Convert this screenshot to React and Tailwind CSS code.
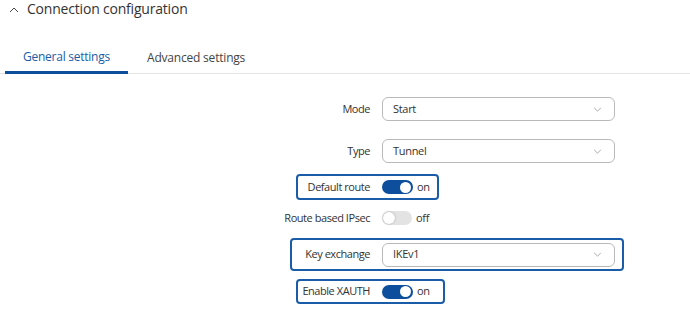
import React from 'react';

const font = { fontFamily: '"Open Sans", "Noto Sans", sans-serif' };

const Chevron = ({ className }) => (
  <svg viewBox="0 0 10 6" className={className} fill="none" stroke="currentColor" strokeWidth="1">
    <path d="M1 1l4 4 4-4" />
  </svg>
);

const Select = ({ value }) => (
  <div className="flex items-center justify-between w-[233px] h-[24px] rounded-[6px] border border-[#b9b9b9] bg-white pl-[10px] pr-[12px]">
    <span className="text-[11px] tracking-[-0.3px] text-[#333]">{value}</span>
    <Chevron className="w-[9px] h-[5px] text-[#9a9a9a]" />
  </div>
);

const Toggle = ({ on }) => (
  <div className="flex items-center gap-[4px]">
    <div
      className={
        on
          ? 'flex items-center justify-end w-[31px] h-[14px] rounded-full bg-[#0d4f9c] px-[2px]'
          : 'flex items-center justify-start w-[30px] h-[14px] rounded-full bg-[#e3e3e3] px-[1px]'
      }
    >
      <div className={on ? 'w-[11px] h-[11px] rounded-full bg-white' : 'w-[12px] h-[12px] rounded-full bg-white shadow-[0_0_2px_rgba(0,0,0,0.35)]'} />
    </div>
    <span className="text-[11px] tracking-[-0.3px] text-[#333]">{on ? 'on' : 'off'}</span>
  </div>
);

const Label = ({ children }) => (
  <span className="text-[11px] tracking-[-0.45px] text-[#333] whitespace-nowrap">{children}</span>
);

// plain row: label right-aligned in a fixed column, control after it
const Row = ({ label, children, className = '' }) => (
  <div className={`flex items-center ${className}`}>
    <div className="w-[370px] flex justify-end">
      <Label>{label}</Label>
    </div>
    <div className="ml-[12px]">{children}</div>
  </div>
);

// highlighted row: blue outline around label + control
const Marked = ({ label, left, pl, pr, h, children, className = '' }) => (
  <div className={`flex ${className}`}>
    <div
      className={`flex items-center border-2 border-[#1a5ca8] rounded-[4px] ${h}`}
      style={{ marginLeft: left, paddingLeft: pl, paddingRight: pr }}
    >
      <div className="flex justify-end" style={{ width: 370 - left - 2 - pl }}>
        <Label>{label}</Label>
      </div>
      <div className="ml-[12px]">{children}</div>
    </div>
  </div>
);

export default function App() {
  return (
    <div className="w-[690px] h-[318px] bg-white overflow-hidden" style={font}>
      {/* Section header */}
      <div className="flex items-center h-[20px] pl-[9px] gap-[8px]">
        <Chevron className="w-[10px] h-[6px] text-[#444] rotate-180 -mt-[1px]" />
        <span className="text-[14px] tracking-[-0.2px] text-[#333] leading-[20px] -mt-[3px]">Connection configuration</span>
      </div>

      {/* Tabs */}
      <div className="mt-[21px] flex border-b border-[#e4e4e4] h-[33px]">
        <div className="w-[123px] ml-[5px] flex items-center justify-center border-b-[3px] border-[#0d4f9c] -mb-[1px] pt-[1px]">
          <span className="text-[12px] tracking-[-0.25px] text-[#1a5ca8]">General settings</span>
        </div>
        <div className="ml-[19px] flex items-center pt-[1px]">
          <span className="text-[12px] tracking-[-0.2px] text-[#444]">Advanced settings</span>
        </div>
      </div>

      {/* Form */}
      <div className="flex flex-col">
        <Row label="Mode" className="mt-[23px]">
          <Select value="Start" />
        </Row>
        <Row label="Type" className="mt-[18px]">
          <Select value="Tunnel" />
        </Row>
        <Marked label="Default route" left={296} pl={10} pr={7} h="h-[26px]" className="mt-[11px]">
          <Toggle on />
        </Marked>
        <Row label="Route based IPsec" className="mt-[10px] h-[16px]">
          <Toggle on={false} />
        </Row>
        <Marked label="Key exchange" left={290} pl={14} pr={7} h="h-[33px]" className="mt-[12px]">
          <Select value="IKEv1" />
        </Marked>
        <Marked label="Enable XAUTH" left={296} pl={6} pr={13} h="h-[25px]" className="mt-[8px]">
          <Toggle on />
        </Marked>
      </div>
    </div>
  );
}
